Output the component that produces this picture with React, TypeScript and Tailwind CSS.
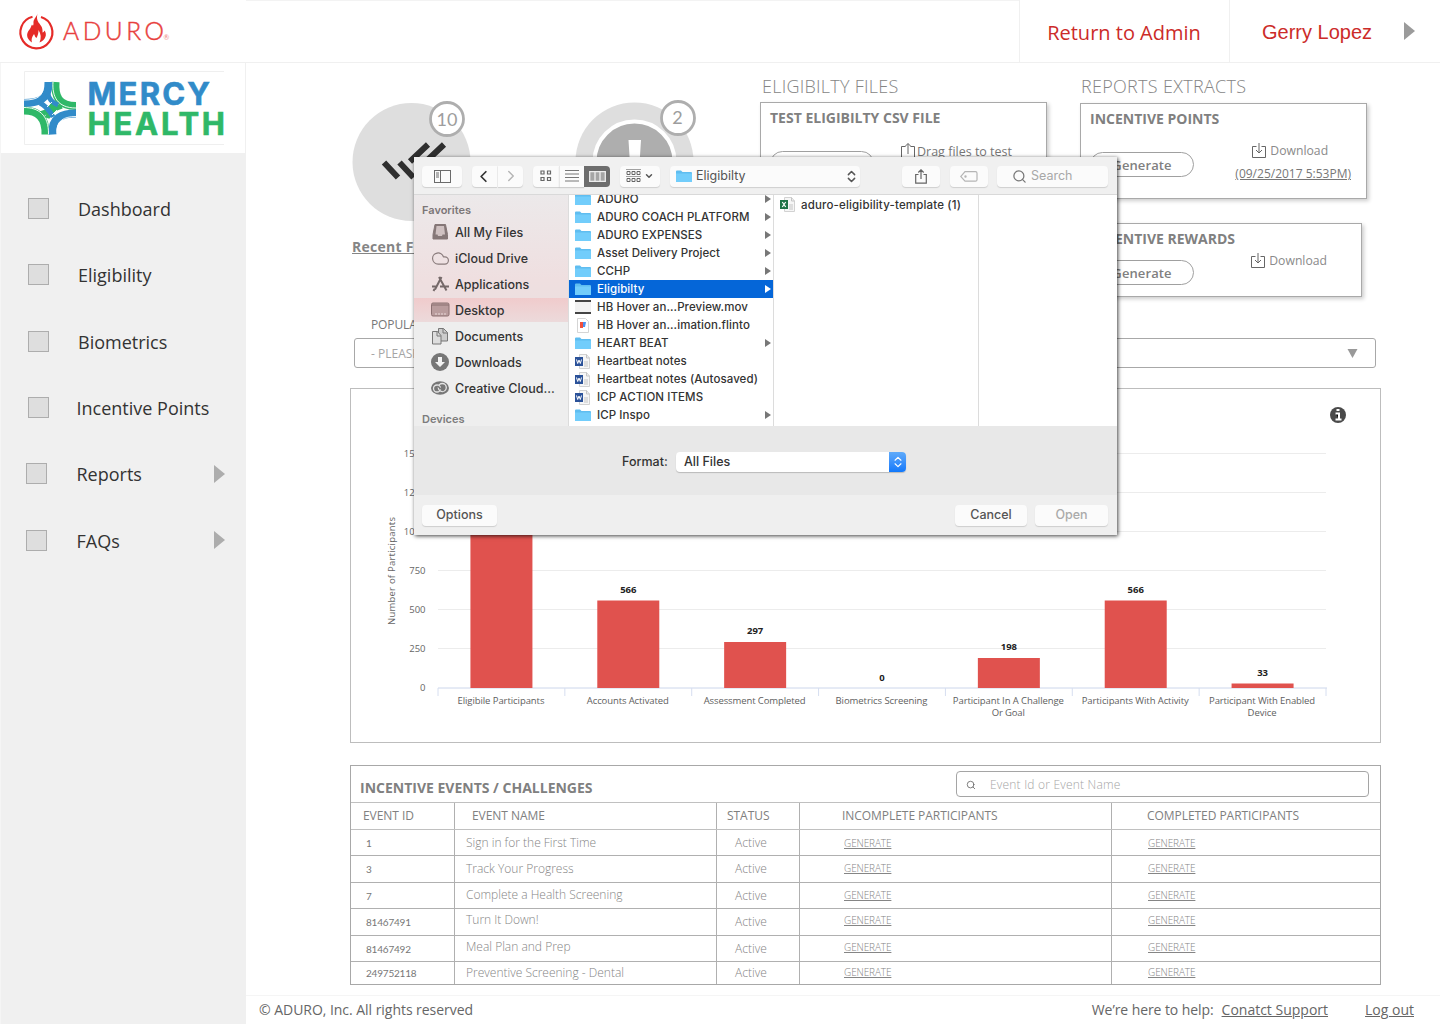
import { ChevronDown, ChevronLeft, ChevronRight, ChevronsUpDown, Search, Cloud } from 'lucide-react';

const navItems = [
  { label: 'Dashboard', box: 'ml-7', text: 'ml-[29px]', arrow: false },
  { label: 'Eligibility', box: 'ml-7', text: 'ml-[29px]', arrow: false },
  { label: 'Biometrics', box: 'ml-7', text: 'ml-[29px]', arrow: false },
  { label: 'Incentive Points', box: 'ml-7', text: 'ml-[27.500px]', arrow: false },
  { label: 'Reports', box: 'ml-[26px]', text: 'ml-[29.500px]', arrow: true },
  { label: 'FAQs', box: 'ml-[26px]', text: 'ml-[29.500px]', arrow: true },
];

const events = [
  { id: '1', name: 'Sign in for the First Time', leading: 'leading-[26px]' },
  { id: '3', name: 'Track Your Progress', leading: 'leading-[25px]' },
  { id: '7', name: 'Complete a Health Screening', leading: 'leading-[24px]' },
  { id: '81467491', name: 'Turn It Down!', leading: 'leading-[22px]' },
  { id: '81467492', name: 'Meal Plan and Prep', leading: 'leading-[22px]' },
  { id: '249752118', name: 'Preventive Screening - Dental', leading: 'leading-[21px]' },
];

const files = [
  { name: 'ADURO', kind: 'folder' },
  { name: 'ADURO COACH PLATFORM', kind: 'folder' },
  { name: 'ADURO EXPENSES', kind: 'folder' },
  { name: 'Asset Delivery Project', kind: 'folder' },
  { name: 'CCHP', kind: 'folder' },
  { name: 'Eligibilty', kind: 'folder', selected: true },
  { name: 'HB Hover an...Preview.mov', kind: 'movie' },
  { name: 'HB Hover an...imation.flinto', kind: 'flinto' },
  { name: 'HEART BEAT', kind: 'folder' },
  { name: 'Heartbeat notes', kind: 'word' },
  { name: 'Heartbeat notes (Autosaved)', kind: 'word' },
  { name: 'ICP ACTION ITEMS', kind: 'word' },
  { name: 'ICP Inspo', kind: 'folder' },
];

const favorites = ['All My Files', 'iCloud Drive', 'Applications', 'Desktop', 'Documents', 'Downloads', 'Creative Cloud...'];

const bars = [
  { lines: ['Eligibile Participants'], widths: [87], top: 140, value: '' },
  { lines: ['Accounts Activated'], widths: [82], top: 212.5, value: '566' },
  { lines: ['Assessment Completed'], widths: [102], top: 254, value: '297' },
  { lines: ['Biometrics Screening'], widths: [92], top: 300, value: '0' },
  { lines: ['Participant In A Challenge', 'Or Goal'], widths: [111, 33], top: 270, value: '198' },
  { lines: ['Participants With Activity'], widths: [107], top: 212.5, value: '566' },
  { lines: ['Participant With Enabled', 'Device'], widths: [106, 29], top: 295.5, value: '33' },
];

function AduroLogo() {
  return (
    <svg width="160" height="44" viewBox="14 8 160 44" className="mb-[1px] ml-[14px]">
      <path d="M32.500 15.800a16 16 0 1 0 8.500.2" fill="none" stroke="#e52b28" strokeWidth="2.200" />
      <path
        d="M37.500 12.500c-1 4-4.500 5.500-4 10 0 2-.8 3-1.500 1-1 2-1 3-2.500 5-3.500 4-3.500 9 2.500 13-1-4 .5-6 2-8.500 1 2 1 3 2.500 4 1.500-3 2-5 2-8 2.500 4 3 8 1 12.500 6-2.500 8-8 5-12-.5 1-1 2-2 2 .5-5-1.500-7-4-10-1.500-3-2-5-1-9z"
        fill="#e52b28"
      />
      <text x="63" y="38.600" textLength="101" fontSize="24.500" fill="#e8403d" stroke="#e8403d" strokeWidth=".45" fontFamily="Lato, sans-serif" fontWeight="300">
        ADURO
      </text>
      <text x="163.500" y="39" fontSize="7" fill="#ee8a88" fontFamily="Lato, sans-serif">®</text>
    </svg>
  );
}

function MercyLogo() {
  return (
    <svg width="200" height="74" viewBox="24 71 200 74" className="mt-2 ml-6">
      <path d="M24.500 144.500v-73H224M24.500 144.500H224" fill="none" stroke="#efefef" />
      <g fill="none" strokeWidth="8">
        <path d="M55.500 82c-1 14 3 24 20.500 24" stroke="#2fb868" />
        <path d="M24 103c14 0 25-3 24.500-21" stroke="#318bc9" />
        <path d="M24 110.500c14 0 22 7 21.500 24" stroke="#2fb868" />
        <path d="M76 113.500c-14 0-25 4-23.500 21" stroke="#318bc9" />
      </g>
      <g fill="none" strokeWidth="5">
        <path d="M40 114q10-2 14-12" stroke="#2fb868" />
        <path d="M47 118q3-9 15-12" stroke="#2fb868" />
        <path d="M48 94q1 7 10 11" stroke="#318bc9" />
        <path d="M40 103q8 4 13 14" stroke="#318bc9" />
      </g>
      <g fill="none" stroke="#fff" strokeWidth=".9">
        <path d="M53 82c-1 14 4 26 23 26" />
        <path d="M24 100c14 0 20-4 19.500-17" />
        <path d="M24 107.500c14 0 25 7 24.500 27" />
        <path d="M76 116.500c-12 0-20 4-19 17" />
        <path d="M47 107l5-5M52 115l5-5" />
      </g>
      <g fontFamily="Inter, sans-serif" fontWeight="700" fontSize="31">
        <text x="87.500" y="104.500" textLength="122.500" fill="#318bc9" stroke="#318bc9" strokeWidth=".6">MERCY</text>
        <text x="87.500" y="134.500" textLength="137.500" fill="#2fb868" stroke="#2fb868" strokeWidth=".6">HEALTH</text>
      </g>
    </svg>
  );
}

function Triangle({ className }: { className: string }) {
  return (
    <svg viewBox="0 0 10 18" preserveAspectRatio="none" className={className} fill="currentColor">
      <path d="M0 0l10 9-10 9z" />
    </svg>
  );
}

function Header() {
  return (
    <header className="flex h-[63px] shrink-0 border-b border-[#f0f0f0] bg-white">
      <div className="flex w-[246px] items-center"><AduroLogo /></div>
      <div className="flex-1 border-t border-[#f3f3f3]" />
      <div className="flex w-[210px] items-center justify-center border-l border-[#f0f0f0] pt-[3px] pr-[1px] text-[20px] text-[#cc2b29]">
        Return to Admin
      </div>
      <div className="flex w-[211px] items-center border-l border-[#f0f0f0] pl-8 font-['Liberation_Sans',sans-serif] text-[20px] text-[#cc2b29]">
        <span className="w-[142px] pt-[2px]">Gerry Lopez</span>
        <Triangle className="h-[18px] w-[11px] text-[#9b9b9b]" />
      </div>
    </header>
  );
}

function Sidebar() {
  return (
    <aside className="w-[246px] shrink-0 border-l border-[#f5f5f5] bg-[#f0f0f0]">
      <div className="flex h-[90px] w-[244px] bg-white"><div className="-ml-[1px]"><MercyLogo /></div></div>
      <nav className="-ml-[1px] pt-[23px]">
        {navItems.map((item) => (
          <div key={item.label} className="flex h-[66.300px] items-center">
            <span className={`mb-[1px] h-[21px] w-[21px] border border-[#adadad] bg-[#dedede] ${item.box}`} />
            <span className={`flex-1 pt-[1px] text-[18px] text-[#333] ${item.text}`}>{item.label}</span>
            {item.arrow && <Triangle className="mr-[21px] mb-[1px] h-[18px] w-[11px] text-[#adadad]" />}
          </div>
        ))}
      </nav>
    </aside>
  );
}

function StatusCircles() {
  return (
    <svg width="350" height="124" viewBox="350 97 350 124" className="mt-[34px] block">
      <circle cx="411.500" cy="162" r="59" fill="#dedede" />
      <path d="M384 162.500l14 15M399.500 162.500l14 15M410 161.500l18-17M426 161.500l18-17" stroke="#2f2f2f" strokeWidth="6" />
      <circle cx="447" cy="119" r="16.500" fill="#fff" stroke="#aeaeae" strokeWidth="2.800" />
      <circle cx="634.500" cy="161.500" r="59" fill="#dedede" />
      <circle cx="634.500" cy="161.500" r="40" fill="#aeaeae" stroke="#fff" strokeWidth="4" />
      <path d="M628.500 140h12.500l-1.500 24h-9.500z" fill="#fff" />
      <circle cx="678" cy="118" r="16.500" fill="#fff" stroke="#aeaeae" strokeWidth="2.800" />
      <g fontFamily="Lato, sans-serif" fontSize="18" fill="#9d9d9d" textAnchor="middle">
        <text x="447" y="126">10</text>
        <text x="677.500" y="123.500">2</text>
      </g>
    </svg>
  );
}

function TransferIcon({ up = false }: { up?: boolean }) {
  return (
    <svg width="14" height="16" viewBox="0 0 14 16" fill="none" stroke="#666" className="shrink-0">
      <path d="M4.500 3.500h-4v11h13v-11h-4" />
      {up ? <path d="M7 11V.7M4 3.500l3-3 3 3" /> : <path d="M7 0v10M4 7l3 3 3-3" />}
    </svg>
  );
}

function Pill() {
  return (
    <div className="flex h-[25px] w-[104px] items-center justify-center rounded-full border border-[#a0a0a0] pt-[2px] text-[13px] font-semibold tracking-[0.100px] text-[#808080]">
      Generate
    </div>
  );
}

function DownloadLink() {
  return (
    <div className="flex items-center gap-1 text-[12.200px] text-[#8a8a8a]">
      <TransferIcon />
      <span>Download</span>
    </div>
  );
}

function TopCards() {
  return (
    <section className="flex h-[247px]">
      <div className="w-[412px]">
        <StatusCircles />
        <div className="mt-[15px] ml-[2px] text-[14px] font-bold tracking-[0.250px] text-[#858585] underline">Recent Files</div>
      </div>
      <div className="w-[319px]">
        <h2 className="h-[39px] pt-[10px] text-[18px] font-light leading-[27px] tracking-[0.250px] text-[#858585]">ELIGIBILTY FILES</h2>
        <div className="-ml-[2px] flex h-[97px] w-[287px] flex-col border border-[#a9a9a9] bg-white px-[9px] pt-[6px] shadow-[2px_2px_4px_rgba(0,0,0,0.2)]">
          <h3 className="text-[14px] font-bold leading-[18px] text-[#808080]">TEST ELIGIBILTY CSV FILE</h3>
          <div className="mt-[15px] flex justify-between pr-[25px]">
            <div className="mt-[9px]"><Pill /></div>
            <div className="flex h-[18px] items-center gap-[2px] text-[12.500px] text-[#777]">
              <TransferIcon up />
              <span className="pt-[3px]">Drag files to test</span>
            </div>
          </div>
        </div>
      </div>
      <div>
        <h2 className="h-[40px] pt-[10px] text-[18px] font-light leading-[27px] tracking-[0.300px] text-[#858585]">REPORTS EXTRACTS</h2>
        <div className="-ml-[1px] flex h-[96px] w-[287px] justify-between border border-[#a9a9a9] bg-white pl-[9px] pr-[15px] shadow-[2px_2px_4px_rgba(0,0,0,0.2)]">
          <div className="pt-[6px]">
            <h3 className="text-[14px] font-bold leading-[18px] text-[#808080]">INCENTIVE POINTS</h3>
            <div className="mt-[24px]"><Pill /></div>
          </div>
          <div className="flex flex-col pt-[38px]">
            <div className="ml-[17px]"><DownloadLink /></div>
            <span className="mt-[6px] text-[12px] leading-[16px] text-[#777] underline">(09/25/2017 5:53PM)</span>
          </div>
        </div>
        <div className="-ml-[1px] mt-[24px] flex h-[74px] w-[282px] justify-between border border-[#a9a9a9] bg-white pl-[9px] pr-[34px] shadow-[2px_2px_4px_rgba(0,0,0,0.2)]">
          <div className="pt-[6px]">
            <h3 className="text-[14px] font-bold leading-[18px] text-[#808080]">INCENTIVE REWARDS</h3>
            <div className="mt-[12px]"><Pill /></div>
          </div>
          <div className="pt-[28px]"><DownloadLink /></div>
        </div>
      </div>
    </section>
  );
}

function ParticipantsChart() {
  const step = 888 / 7;
  return (
    <div className="h-[355px] w-[1031px] border border-[#bdbdbd]">
      <svg width="1029" height="353" viewBox="0 0 1029 353" fontFamily="Open Sans, sans-serif" fontSize="9.500">
        {[1500, 1250, 1000, 750, 500, 250, 0].map((tick, i) => (
          <g key={tick}>
            {tick > 0 && <path d={`M87 ${64.500 + i * 39}H975`} stroke="#ececec" />}
            <text x="74.500" y={68 + i * 39} textAnchor="end" fill="#666">{tick}</text>
          </g>
        ))}
        <path d="M87 299H976" stroke="#ccd6eb" />
        {Array.from({ length: 8 }, (_, i) => (
          <path key={i} d={`M${87 + i * step} 299v8`} stroke="#d6def0" />
        ))}
        <text x="-236" y="44" transform="rotate(-90)" textLength="108" fill="#666">Number of Participants</text>
        {bars.map((bar, i) => {
          const mid = 87 + step * (i + 0.5);
          return (
            <g key={i}>
              <rect x={mid - 31} y={bar.top - 1} width="62" height={300 - bar.top} fill="#e0524e" />
              <text x={mid} y={bar.top - (bar.value === '0' ? 8 : 9)} textAnchor="middle" fontWeight="700" fill="#222">{bar.value}</text>
              {bar.lines.map((line, n) => (
                <text key={line} x={mid - 0.5 - bar.widths[n] / 2} y={314.500 + n * 12} textLength={bar.widths[n]} fill="#606060">{line}</text>
              ))}
            </g>
          );
        })}
        <circle cx="987" cy="26" r="8" fill="#4a4a4a" />
        <path d="M984.500 24.500h3.500v5.500M984.500 30.500h6M985.500 21h3" stroke="#fff" strokeWidth="2" />
      </svg>
    </div>
  );
}

const cols = 'grid grid-cols-[104px_262px_83px_312px_268px] divide-x divide-[#b0b0b0]';

function EventsTable() {
  return (
    <section className="mt-[22px] h-[220px] w-[1031px] overflow-hidden border border-[#a8a8a8]">
      <div className="flex h-[37px] items-center justify-between border-b border-[#c0c0c0] pl-[9px] pr-[11px]">
        <h3 className="pt-[6px] text-[14px] font-bold text-[#808080]">INCENTIVE EVENTS / CHALLENGES</h3>
        <div className="flex h-[26px] w-[413px] items-center rounded-[4px] border border-[#a5a5a5] pl-[9px] pt-[1px] text-[12px] font-light tracking-[0.200px] text-[#a5a5a5]">
          <Search size={10} className="mr-[14px] text-[#666]" />
          Event Id or Event Name
        </div>
      </div>
      <div className={`${cols} h-[27px] border-b border-[#c0c0c0] text-[12px] leading-[26px] tracking-[-0.050px] text-[#808080]`}>
        <span className="pl-3">EVENT ID</span>
        <span className="pl-[17px]">EVENT NAME</span>
        <span className="pl-[10px]">STATUS</span>
        <span className="pl-[42px]">INCOMPLETE PARTICIPANTS</span>
        <span className="pl-[35px]">COMPLETED PARTICIPANTS</span>
      </div>
      {events.map((event) => (
        <div key={event.id} className={`${cols} h-[26.400px] border-b border-[#b0b0b0] text-[12px] font-light leading-[26px] text-[#858585] last:h-[22px] last:border-b-0 last:leading-[22px]`}>
          <span className="pl-[15px] font-['Lato',sans-serif] text-[10px] font-normal tracking-[-0.200px] text-[#777]">{event.id}</span>
          <span className={`pl-[11px] ${event.leading}`}>{event.name}</span>
          <span className="pl-[18px]">Active</span>
          <span className={`pl-[44px] text-[10px] tracking-[-0.100px] underline ${event.leading}`}>GENERATE</span>
          <span className={`pl-[36px] text-[10px] tracking-[-0.100px] underline ${event.leading}`}>GENERATE</span>
        </div>
      ))}
    </section>
  );
}

function Folder() {
  return (
    <svg width="16" height="13" viewBox="0 0 16 13">
      <path d="M0 1.500Q0 .5 1 .5h4l1.500 1.500H15q1 0 1 1V12H0z" fill="#5fbdf0" />
      <path d="M0 3.500h16V12H0z" fill="#72cdfb" />
    </svg>
  );
}

function FileIcon({ kind }: { kind: string }) {
  if (kind === 'folder') return <Folder />;
  if (kind === 'movie') {
    return (
      <svg width="16" height="14" viewBox="0 0 16 14">
        <path d="M0 0h16v14H0z" fill="#f1f1f1" />
        <path d="M0 0h16v2H0zM0 12h16v2H0z" fill="#444" />
      </svg>
    );
  }
  if (kind === 'flinto') {
    return (
      <svg width="16" height="15" viewBox="0 0 16 15">
        <path d="M2.500.5h8l3 3v11h-11z" fill="#fff" stroke="#d5d5d5" />
        <path d="M5 4h3v6H5z" fill="#f0503c" />
        <path d="M8 4h3l-1 5H8z" fill="#4b8ff0" />
      </svg>
    );
  }
  const color = kind === 'word' ? '#2b5299' : '#1f7346';
  return (
    <svg width="16" height="15" viewBox="0 0 16 15">
      <path d="M4.500.5h7l3 3.500v10.500h-10z" fill="#f6f6f6" stroke="#d2d2d2" />
      <path d="M11.500.5v3.500h3M9 8h4M9 10h4M9 12h4" fill="none" stroke="#c5c5c5" />
      <path d="M0 3h8v9H0z" fill={color} />
      {kind === 'word' ? (
        <path d="M1.500 5.500l1.200 4L4 6l1.300 3.500 1.200-4" fill="none" stroke="#fff" />
      ) : (
        <path d="M2.300 5l3.400 5M5.700 5l-3.400 5" stroke="#fff" strokeWidth="1.200" />
      )}
    </svg>
  );
}

function FavoriteIcon({ name }: { name: string }) {
  if (name === 'iCloud Drive') return <Cloud size={19} strokeWidth={1.500} className="text-[#8a7c7c]" />;
  return (
    <svg width="19" height="18" viewBox="0 0 19 18" fill="none" stroke="#777">
      {name === 'All My Files' && (
        <>
          <path d="M4 1.500h10.500l2 10v4.500H2v-4.500z" fill="#857777" stroke="#857777" />
          <path d="M5.500 3h7.500l1 8.500h-2.500l-.5 1.500h-4L6.500 11.500H4.500z" fill="#cfc1c1" stroke="none" />
        </>
      )}
      {name === 'Applications' && (
        <path d="M10.500 2L4 14.500M8 2l7.500 13.500M1 11.500h5M9 11.500h9M3.500 14l-1 2" stroke="#756969" strokeWidth="2" />
      )}
      {name === 'Desktop' && (
        <>
          <rect x=".5" y="2" width="17.500" height="13" rx="1.500" fill="#b99c9d" stroke="#8a7071" />
          <path d="M1 4h17" stroke="#8a7071" />
          <path d="M4 13h11" stroke="#eadada" strokeDasharray="2 1" />
        </>
      )}
      {name === 'Documents' && (
        <>
          <path d="M7.500 1.500h5l4 4v8.500h-9z" fill="#ccc" />
          <path d="M12 1.500v4.500h4.500" />
          <path d="M1.500 4.500h5l3.500 4v8.500H1.500z" fill="#ddd" />
          <path d="M6 4.500V9h4" />
        </>
      )}
      {name === 'Downloads' && (
        <>
          <circle cx="9" cy="9" r="9" fill="#767676" stroke="none" />
          <path d="M7 4h4v5h3l-5 5-5-5h3z" fill="#f2f2f2" stroke="none" />
        </>
      )}
      {name === 'Creative Cloud...' && (
        <>
          <ellipse cx="9" cy="9" rx="9" ry="6.700" fill="#777" stroke="none" />
          <circle cx="6" cy="9.500" r="3.500" stroke="#e5e5e5" strokeWidth="1.300" />
          <circle cx="11.300" cy="8.500" r="4" stroke="#e5e5e5" strokeWidth="1.300" />
          <path d="M6.500 7l6 5" stroke="#777" strokeWidth="1.500" />
        </>
      )}
    </svg>
  );
}

const toolButton = 'flex h-[21px] items-center justify-center bg-[#fbfbfb] text-[#555] shadow-[0_1px_1px_rgba(0,0,0,0.14)]';

function Toolbar() {
  return (
    <div className="flex h-[38px] shrink-0 items-center border-b border-[#d9d9d9] bg-[#f0f0f0] pl-2 pt-[1px]">
      <div className={`${toolButton} w-[40px] rounded-[4px]`}>
        <svg width="17" height="13" viewBox="0 0 17 13" fill="none" stroke="#6b6b6b">
          <rect x=".5" y=".5" width="16" height="12" />
          <path d="M6.500 1v11M2 3h3M2 5h3M2 7h3" />
        </svg>
      </div>
      <div className={`${toolButton} ml-[10px] w-[25px] rounded-l-[4px]`}><ChevronLeft size={19} strokeWidth={2.200} className="-ml-[2px] text-[#333]" /></div>
      <div className={`${toolButton} ml-[1px] w-[25px] rounded-r-[4px]`}><ChevronRight size={18} strokeWidth={1.900} className="text-[#b5b5b5]" /></div>
      <div className={`${toolButton} ml-[10px] w-[26px] rounded-l-[4px]`}>
        <svg width="12" height="12" viewBox="0 0 12 12" fill="none" stroke="#666" strokeWidth="1.200">
          <path d="M1 1h3v3H1zM7.500 1h3v3h-3zM1 7.500h3v3H1zM7.500 7.500h3v3h-3z" />
        </svg>
      </div>
      <div className={`${toolButton} w-[25px] border-l border-[#e8e8e8]`}>
        <svg width="14" height="12" viewBox="0 0 14 12" stroke="#777"><path d="M0 .5h14M0 4h14M0 7.500h14M0 11h14" /></svg>
      </div>
      <div className="flex h-[21px] w-[26px] items-center justify-center rounded-r-[4px] bg-[#6d6d6d]">
        <svg width="17" height="11" viewBox="0 0 17 11" fill="#a5a5a5" stroke="#ededed" strokeWidth="1.300">
          <path d="M.7.700h15.600v9.600H.7zM6 1v9M11 1v9" />
        </svg>
      </div>
      <div className={`${toolButton} ml-[10px] w-[40px] gap-[3px] rounded-[4px]`}>
        <svg width="15" height="14" viewBox="0 0 15 14" fill="none" stroke="#666">
          <path d="M0 .5h15M0 7.500h15" strokeOpacity=".6" />
          <path d="M1 2.500h3v3H1zM6 2.500h3v3H6zM11 2.500h3v3h-3zM1 9.500h3v3H1zM6 9.500h3v3H6zM11 9.500h3v3h-3z" />
        </svg>
        <ChevronDown size={10} strokeWidth={3.500} />
      </div>
      <div className={`${toolButton} ml-[10px] w-[190px] justify-start rounded-[4px] pl-[6px] text-[12.500px] text-[#4a4a4a]`}>
        <Folder />
        <span className="ml-1 flex-1 pt-[1px]">Eligibilty</span>
        <ChevronsUpDown size={15} strokeWidth={2.400} className="mr-[1px]" />
      </div>
      <div className={`${toolButton} ml-[42px] w-[38px] rounded-[4px]`}>
        <svg width="12" height="15" viewBox="0 0 12 15" fill="none" stroke="#666" strokeWidth="1.200">
          <path d="M3.500 5.500H.7v8.700h10.600V5.500H8.500M6 10V1M3.300 3.500L6 .8l2.700 2.700" />
        </svg>
      </div>
      <div className={`${toolButton} ml-[10px] w-[38px] rounded-[4px]`}>
        <svg width="18" height="11" viewBox="0 0 18 11" fill="none" stroke="#b5b5b5" strokeWidth="1.200">
          <path d="M5 .7h10.500q1.500 0 1.500 1.500v6.500q0 1.500-1.500 1.500H5L.7 5.500z" />
          <circle cx="5.500" cy="5.500" r=".6" />
        </svg>
      </div>
      <div className={`${toolButton} ml-[9px] w-[111px] rounded-[4px]`}>
        <span className="flex w-full items-center pl-[15px] pt-[1px] text-[12.500px] text-[#a8a8a8]">
          <Search size={15} className="mr-[4px] text-[#777]" />
          Search
        </span>
      </div>
    </div>
  );
}

function FileDialog() {
  return (
    <div className="absolute left-[414px] top-[157px] flex h-[378px] w-[703px] flex-col bg-[#efefef] font-['Inter',sans-serif] text-[#333] shadow-[1px_1px_4px_rgba(0,0,0,0.75)]">
      <Toolbar />
      <div className="flex h-[231px] shrink-0 overflow-hidden bg-white">
        <div className="w-[155px] border-r border-[#dcdcdc] bg-[linear-gradient(#ece9ea,#efdfe0_85px,#eddfe0_102px,#eee_127px)] text-[12.500px]">
          <div className="h-[24px] pl-2 pt-[7px] text-[11px] font-semibold leading-[16px] text-[#7c7677]">Favorites</div>
          {favorites.map((name) => (
            <div key={name} className={`flex items-center pl-[17px] font-medium ${name === 'Desktop' ? 'my-[1px] h-[24px] bg-linear-to-b from-[#f0cbcc] to-[#ecdadb]' : 'h-[26px]'}`}>
              <span className="w-[24px]"><FavoriteIcon name={name} /></span>
              <span className="pt-[2px]">{name}</span>
            </div>
          ))}
          <div className="pl-2 pt-[10px] text-[11px] font-semibold leading-[16px] text-[#7c7c7c]">Devices</div>
        </div>
        <div className="w-[205px] border-r border-[#dcdcdc] text-[11.500px] font-medium tracking-[0.080px]">
          <div className="-mt-[5px]">
            {files.map((file) => (
              <div key={file.name} className={`flex h-[18px] items-center pl-[6px] pr-[2px] ${file.selected ? 'bg-[#0566d8] text-white' : ''}`}>
                <FileIcon kind={file.kind} />
                <span className="ml-[6px] flex-1 whitespace-nowrap pt-[2px]">{file.name}</span>
                {file.kind === 'folder' && <Triangle className={`h-[8px] w-[6px] ${file.selected ? 'text-white' : 'text-[#777]'}`} />}
              </div>
            ))}
          </div>
        </div>
        <div className="w-[205px] border-r border-[#dcdcdc] text-[11.500px] font-medium tracking-[0.160px]">
          <div className="flex h-[19px] items-center pl-[6px]">
            <FileIcon kind="excel" />
            <span className="ml-[5px] whitespace-nowrap pt-[2px]">aduro-eligibility-template (1)</span>
          </div>
        </div>
      </div>
      <div className="flex h-[69px] shrink-0 items-center bg-[#e8e8e8] pl-[208px] text-[12.500px] font-medium">
        <span className="w-[54px] pt-[3px]">Format:</span>
        <div className="mt-[3px] flex h-[20px] w-[230px] items-center overflow-hidden rounded-[4px] bg-white pl-2 shadow-[0_1px_1px_rgba(0,0,0,0.2)]">
          <span className="flex-1 pt-[1px]">All Files</span>
          <span className="flex h-full w-[17px] items-center justify-center bg-linear-to-b from-[#5eaafa] to-[#0f78fb] text-white">
            <ChevronsUpDown size={14} />
          </span>
        </div>
      </div>
      <div className="flex flex-1 items-center pl-2 pr-[9px] text-[12.500px] font-medium">
        <div className={`${toolButton} w-[75px] rounded-[4px]`}>Options</div>
        <div className={`${toolButton} ml-auto w-[72px] rounded-[4px]`}>Cancel</div>
        <div className={`${toolButton} ml-2 w-[73px] rounded-[4px]`}><span className="text-[#aaa]">Open</span></div>
      </div>
    </div>
  );
}

export default function App() {
  return (
    <div className="relative flex h-[1024px] w-[1440px] flex-col overflow-hidden bg-white font-['Open_Sans',sans-serif]">
      <Header />
      <div className="flex flex-1">
        <Sidebar />
        <div className="flex flex-1 flex-col">
          <main className="h-[932px] pl-[104px]">
            <TopCards />
            <div className="mt-[6px] pl-[21px] text-[12px] leading-[18px] tracking-[-0.100px] text-[#777]">POPULATION</div>
            <div className="mb-[20px] ml-[4px] mt-[4px] flex h-[30px] w-[1022px] items-center justify-between rounded-[3px] border border-[#a8a8a8] pl-4 pr-[17px] text-[12px] text-[#a5a5a5]">
              <span className="pt-[1px]">- PLEASE SELECT -</span>
              <svg width="11" height="9" viewBox="0 0 10 9"><path d="M0 0h10L5 9z" fill="#999" /></svg>
            </div>
            <ParticipantsChart />
            <EventsTable />
          </main>
          <footer className="flex h-[28px] items-center border-t border-[#f5f5f5] pl-[13px] pr-[26px] text-[14px] text-[#666]">
            <span className="tracking-[-0.040px]">© ADURO, Inc. All rights reserved</span>
            <span className="ml-auto tracking-[-0.080px]">We’re here to help:</span>
            <a className="ml-2 underline">Conatct Support</a>
            <a className="ml-[37px] underline">Log out</a>
          </footer>
        </div>
      </div>
      <FileDialog />
    </div>
  );
}
